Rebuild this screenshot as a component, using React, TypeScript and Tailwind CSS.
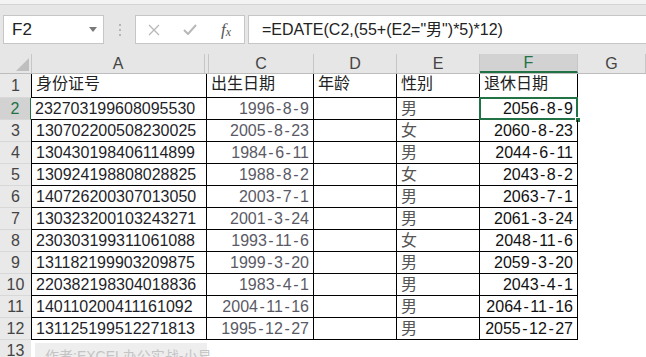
import React from 'react';

const rows = [
  ['232703199608095530', '1996-8-9', '男', '2056-8-9'],
  ['130702200508230025', '2005-8-23', '女', '2060-8-23'],
  ['130430198406114899', '1984-6-11', '男', '2044-6-11'],
  ['130924198808028825', '1988-8-2', '女', '2043-8-2'],
  ['140726200307013050', '2003-7-1', '男', '2063-7-1'],
  ['130323200103243271', '2001-3-24', '男', '2061-3-24'],
  ['230303199311061088', '1993-11-6', '女', '2048-11-6'],
  ['131182199903209875', '1999-3-20', '男', '2059-3-20'],
  ['220382198304018836', '1983-4-1', '男', '2043-4-1'],
  ['140110200411161092', '2004-11-16', '男', '2064-11-16'],
  ['131125199512271813', '1995-12-27', '男', '2055-12-27'],
];

const font = "font-['Liberation_Sans','Noto_Sans_CJK_SC',sans-serif]";

// 日期里的短横线比 Arial 的宽一些
const DateText = ({ value }: { value: string }) => {
  const parts = value.split('-');
  return (
    <span>
      {parts.map((p, i) => (
        <React.Fragment key={i}>
          {i > 0 && <span className="mx-[1.5px]">-</span>}
          {p}
        </React.Fragment>
      ))}
    </span>
  );
};

const ColHeader = ({ label, w, active }: { label: string; w: string; active?: boolean }) => (
  <div
    className={`${w} h-full flex items-center justify-center border-r border-[#c6c6c6] text-[16px] ${
      active ? 'bg-[#d2d2d2] text-[#217346] border-b-2 border-b-[#217346]' : 'text-[#444]'
    }`}
  >
    {label}
  </div>
);

export default function App() {
  return (
    <div className={`w-[646px] h-[357px] overflow-hidden bg-white ${font}`}>
      {/* top strip */}
      <div className="h-[5px] bg-[#f3f3f3] border-b border-[#d4d4d4]" />

      {/* formula bar */}
      <div className="h-[49px] bg-[#e6e6e6] flex items-start pt-[10px] pl-[3px] overflow-hidden">
        <div className="w-[101px] h-[29px] shrink-0 bg-white border border-[#c6c6c6] flex items-center justify-between pl-[8px] pr-[6px]">
          <span className="text-[17px] text-[#222]">F2</span>
          <svg width="8" height="5" viewBox="0 0 8 5"><path d="M0 0h8L4 5z" fill="#7a7a7a" /></svg>
        </div>
        <div className="w-[31px] h-[29px] shrink-0 flex flex-col items-center justify-center gap-[3px]">
          <span className="w-[2px] h-[2px] bg-[#b5b5b5]" />
          <span className="w-[2px] h-[2px] bg-[#b5b5b5]" />
          <span className="w-[2px] h-[2px] bg-[#b5b5b5]" />
        </div>
        <div className="w-[110px] h-[29px] shrink-0 bg-white border border-[#c6c6c6] flex items-center">
          <div className="w-[36px] flex justify-center">
            <svg width="12" height="12" viewBox="0 0 12 12"><path d="M1 1l10 10M11 1L1 11" stroke="#b8b8b8" strokeWidth="1.3" /></svg>
          </div>
          <div className="w-[36px] flex justify-center">
            <svg width="14" height="11" viewBox="0 0 14 11"><path d="M1 6l4 4 8-9" stroke="#b8b8b8" strokeWidth="2" fill="none" /></svg>
          </div>
          <div className="w-[36px] flex justify-center font-['Liberation_Serif',serif] italic text-[#555] text-[17px] leading-none">
            f<span className="text-[12px] self-end">x</span>
          </div>
        </div>
        <div className="w-[420px] h-[29px] shrink-0 ml-[3px] bg-white border border-[#c6c6c6] flex items-center pl-[13px] text-[16px] text-[#222] whitespace-nowrap">
          =EDATE(C2,(55+(E2="男")*5)*12)
        </div>
      </div>

      {/* column headers */}
      <div className="h-[20px] flex bg-[#e6e6e6] border-b border-[#bdbdbd]">
        <div className="w-[32px] h-full border-r border-[#c6c6c6] flex items-end justify-end pr-[2px] pb-[2px]">
          <svg width="13" height="13" viewBox="0 0 13 13"><path d="M13 0v13H0z" fill="#bfbfbf" /></svg>
        </div>
        <ColHeader label="A" w="w-[173px]" />
        <div className="w-[4px] h-full border-r border-[#c6c6c6]" />
        <ColHeader label="C" w="w-[105px]" />
        <ColHeader label="D" w="w-[83px]" />
        <ColHeader label="E" w="w-[83px]" />
        <ColHeader label="F" w="w-[98px]" active />
        <ColHeader label="G" w="w-[68px]" />
      </div>

      {/* row 1 */}
      <div className="h-[24px] flex text-[16px]">
        <div className="w-[31px] h-full bg-[#e9e9e9] border-b border-[#d8d8d8] flex items-center justify-center text-[#444]">1</div>
        <div className="w-[176px] h-full border-l border-r border-b border-black flex items-end pb-[1px] pl-[4px] text-[#222]">身份证号</div>
        <div className="w-[107px] h-full border-r border-b border-black flex items-end pb-[1px] pl-[4px] text-[#222]">出生日期</div>
        <div className="w-[83px] h-full border-r border-b border-black flex items-end pb-[1px] pl-[4px] text-[#222]">年龄</div>
        <div className="w-[83px] h-full border-r border-b border-black flex items-end pb-[1px] pl-[4px] text-[#222]">性别</div>
        <div className="w-[98px] h-full border-r border-b border-black flex items-end pb-[1px] pl-[4px] text-[#222]">退休日期</div>
      </div>

      {rows.map((r, i) => {
        const sel = i === 0;
        return (
          <div key={i} className="h-[22px] flex text-[16px]">
            <div
              className={`w-[31px] h-full border-b border-[#d8d8d8] flex items-center justify-center ${
                sel ? 'bg-[#d2d2d2] text-[#217346] border-r border-r-[#217346]' : 'bg-[#e9e9e9] text-[#444]'
              }`}
            >
              {i + 2}
            </div>
            <div className={`w-[176px] h-full ${sel ? '' : 'border-l'} border-r border-b border-black flex items-center pl-[4px] text-[#1f1f2a]`}>
              {r[0]}
            </div>
            <div className="w-[107px] h-full border-r border-b border-black flex items-center justify-end pr-[4px] text-[#5a5a66]">
              <DateText value={r[1]} />
            </div>
            <div className="w-[83px] h-full border-r border-b border-black" />
            <div className="w-[83px] h-full border-r border-b border-black flex items-center pl-[4px] text-[#555]">
              {r[2]}
            </div>
            <div className="relative w-[98px] h-full border-r border-b border-black flex items-center justify-end pr-[4px] text-[#111]">
              <DateText value={r[3]} />
              {sel && (
                <>
                  <div className="absolute -left-[1px] -top-[1px] -right-[1px] -bottom-[1px] border-2 border-[#217346]" />
                  <div className="absolute -right-[4px] -bottom-[4px] w-[6px] h-[6px] bg-[#217346] border border-white" />
                </>
              )}
            </div>
          </div>
        );
      })}

      {/* row 13 */}
      <div className="h-[22px] flex text-[16px]">
        <div className="w-[31px] h-full bg-[#e9e9e9] flex items-center justify-center text-[#444]">13</div>
        <div className="w-[172px] ml-[4px] mt-[3px] h-[30px] bg-[#eeeeee] pl-[10px] pt-[3px] text-[14px] text-[#c4c4c4] whitespace-nowrap">
          作者:EXCEL办公实战-小易
        </div>
      </div>
    </div>
  );
}
